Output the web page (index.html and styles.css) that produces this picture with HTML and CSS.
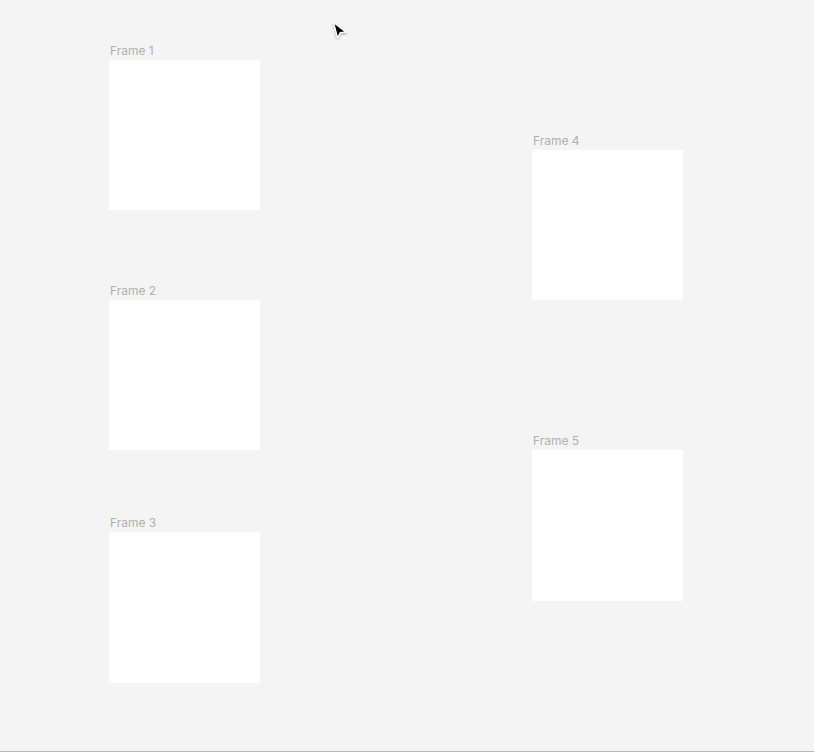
FILE: index.html
```html
<!DOCTYPE html>
<html>
<head>
<meta charset="utf-8">
<link rel="stylesheet" href="styles.css">
</head>
<body>
<div class="canvas">
  <div class="frame f1"><div class="label">Frame 1</div><div class="box"></div></div>
  <div class="frame f2"><div class="label">Frame 2</div><div class="box"></div></div>
  <div class="frame f3"><div class="label">Frame 3</div><div class="box"></div></div>
  <div class="frame f4"><div class="label">Frame 4</div><div class="box"></div></div>
  <div class="frame f5"><div class="label">Frame 5</div><div class="box"></div></div>
  <svg class="cursor" width="20" height="24" viewBox="0 0 20 24">
    <defs>
      <filter id="sh" x="-50%" y="-50%" width="200%" height="200%">
        <feGaussianBlur in="SourceAlpha" stdDeviation="1.2"/>
        <feOffset dx="0" dy="1"/>
        <feComponentTransfer><feFuncA type="linear" slope="0.4"/></feComponentTransfer>
        <feMerge><feMergeNode/><feMergeNode in="SourceGraphic"/></feMerge>
      </filter>
    </defs>
    <path d="M3.5 2.5 L16 12 L10.3 12.6 L7.6 18 Z" fill="#000" stroke="#fff" stroke-width="1.3" stroke-linejoin="round" filter="url(#sh)"/>
  </svg>
</div>
</body>
</html>
```
FILE: styles.css
```css
html, body {
  margin: 0;
  padding: 0;
  background: #f4f4f4;
}
.canvas {
  position: relative;
  width: 814px;
  height: 751px;
  background: #f4f4f4;
  border-bottom: 1px solid #b8b8b8;
  overflow: hidden;
  font-family: Inter, "Noto Sans", sans-serif;
}
.frame {
  position: absolute;
  display: flex;
  flex-direction: column;
}
.label {
  font-size: 12px;
  line-height: 14px;
  color: #b0b0b0;
  padding-left: 1px;
  margin-bottom: 2px;
}
.box {
  width: 151px;
  height: 150px;
  background: #ffffff;
}
.f1 { left: 109px; top: 44px; }
.f2 { left: 109px; top: 284px; }
.f3 { left: 109px; top: 516px; }
.f3 .box { height: 151px; }
.f4 { left: 532px; top: 134px; }
.f5 { left: 532px; top: 434px; }
.f5 .box { height: 151px; }
.cursor {
  position: absolute;
  left: 330px;
  top: 20px;
}
```
